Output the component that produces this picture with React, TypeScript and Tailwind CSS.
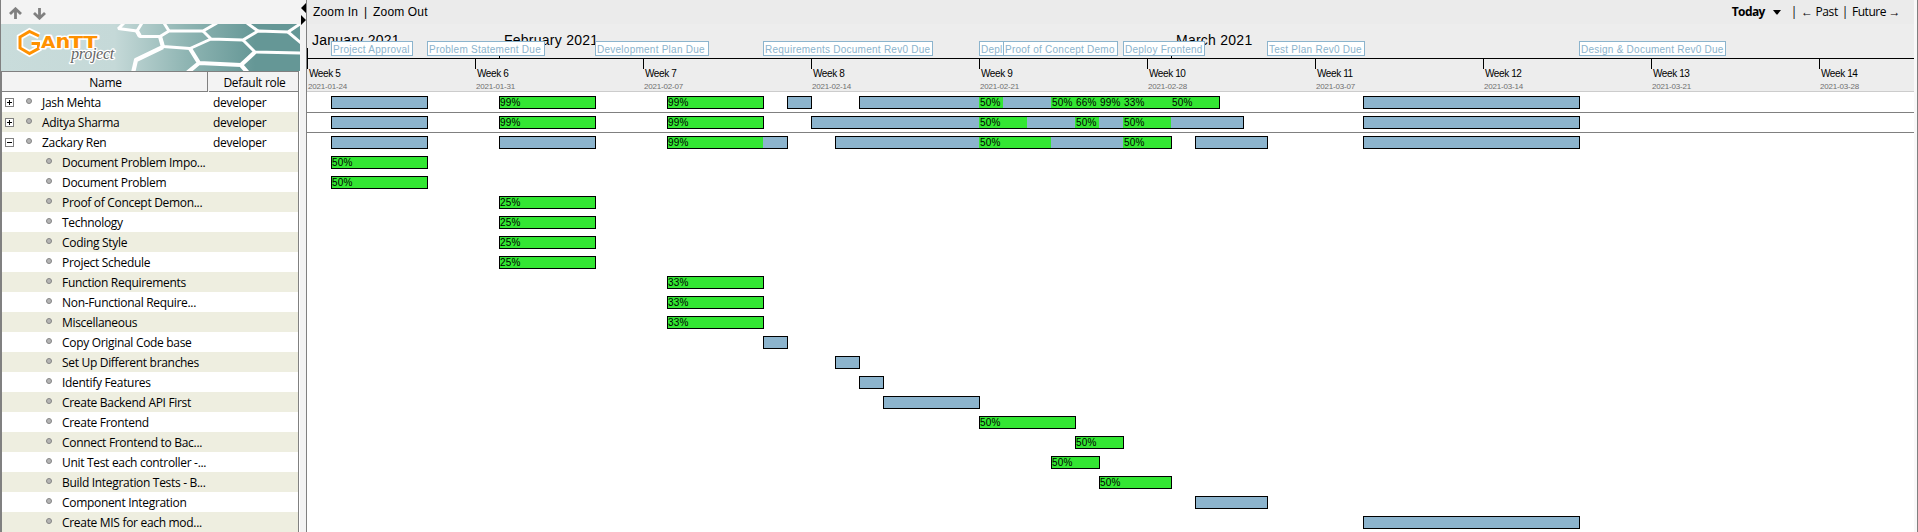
const DAY = 24;

type Segment = { days: number; done?: string };
type Bar = { start: number; segments: Segment[] };
type Row = { name: string; kind: "closed" | "open" | "leaf"; bars: Bar[] };

const bar = (start: number, end: number, done?: string): Bar => ({
  start,
  segments: [{ days: end - start, done }],
});

const leaf = (name: string, start: number, end: number, done?: string): Row => ({
  name,
  kind: "leaf",
  bars: [bar(start, end, done)],
});

const rows: Row[] = [
  {
    name: "Jash Mehta",
    kind: "closed",
    bars: [
      bar(1, 5),
      bar(8, 12, "99%"),
      bar(15, 19, "99%"),
      bar(20, 21),
      {
        start: 23,
        segments: [
          { days: 5 },
          { days: 1, done: "50%" },
          { days: 2 },
          { days: 1, done: "50%" },
          { days: 1, done: "66%" },
          { days: 1, done: "99%" },
          { days: 2, done: "33%" },
          { days: 2, done: "50%" },
        ],
      },
      bar(44, 53),
    ],
  },
  {
    name: "Aditya Sharma",
    kind: "closed",
    bars: [
      bar(1, 5),
      bar(8, 12, "99%"),
      bar(15, 19, "99%"),
      {
        start: 21,
        segments: [
          { days: 7 },
          { days: 2, done: "50%" },
          { days: 2 },
          { days: 1, done: "50%" },
          { days: 1 },
          { days: 2, done: "50%" },
          { days: 3 },
        ],
      },
      bar(44, 53),
    ],
  },
  {
    name: "Zackary Ren",
    kind: "open",
    bars: [
      bar(1, 5),
      bar(8, 12),
      { start: 15, segments: [{ days: 4, done: "99%" }, { days: 1 }] },
      {
        start: 22,
        segments: [{ days: 6 }, { days: 3, done: "50%" }, { days: 3 }, { days: 2, done: "50%" }],
      },
      bar(37, 40),
      bar(44, 53),
    ],
  },
  leaf("Document Problem Impo...", 1, 5, "50%"),
  leaf("Document Problem", 1, 5, "50%"),
  leaf("Proof of Concept Demon...", 8, 12, "25%"),
  leaf("Technology", 8, 12, "25%"),
  leaf("Coding Style", 8, 12, "25%"),
  leaf("Project Schedule", 8, 12, "25%"),
  leaf("Function Requirements", 15, 19, "33%"),
  leaf("Non-Functional Require...", 15, 19, "33%"),
  leaf("Miscellaneous", 15, 19, "33%"),
  leaf("Copy Original Code base", 19, 20),
  leaf("Set Up Different branches", 22, 23),
  leaf("Identify Features", 23, 24),
  leaf("Create Backend API First", 24, 28),
  leaf("Create Frontend", 28, 32, "50%"),
  leaf("Connect Frontend to Bac...", 32, 34, "50%"),
  leaf("Unit Test each controller -...", 31, 33, "50%"),
  leaf("Build Integration Tests - B...", 33, 36, "50%"),
  leaf("Component Integration", 37, 40),
  leaf("Create MIS for each mod...", 44, 53),
];

const weeks = [
  ["Week 5", "2021-01-24"],
  ["Week 6", "2021-01-31"],
  ["Week 7", "2021-02-07"],
  ["Week 8", "2021-02-14"],
  ["Week 9", "2021-02-21"],
  ["Week 10", "2021-02-28"],
  ["Week 11", "2021-03-07"],
  ["Week 12", "2021-03-14"],
  ["Week 13", "2021-03-21"],
  ["Week 14", "2021-03-28"],
];

const months = [
  { label: "January 2021", day: 0 },
  { label: "February 2021", day: 8 },
  { label: "March 2021", day: 36 },
];

const milestones = [
  { label: "Project Approval", day: 1, width: 82 },
  { label: "Problem Statement Due", day: 5, width: 118 },
  { label: "Development Plan Due", day: 12, width: 114 },
  { label: "Requirements Document Rev0 Due", day: 19, width: 170 },
  { label: "Depl", day: 28, width: 25 },
  { label: "Proof of Concept Demo", day: 29, width: 115 },
  { label: "Deploy Frontend", day: 34, width: 82 },
  { label: "Test Plan Rev0 Due", day: 40, width: 98 },
  { label: "Design & Document Rev0 Due", day: 53, width: 147 },
];

function Banner() {
  return (
    <svg width="300" height="47" viewBox="0 24 300 47" className="block shrink-0">
      <defs>
        <linearGradient id="sea" x1="0" x2="1" y1="0" y2="0">
          <stop offset="0" stopColor="#c9dcdb" />
          <stop offset="0.38" stopColor="#c5d9d8" />
          <stop offset="0.62" stopColor="#8fb5b3" />
          <stop offset="0.85" stopColor="#659796" />
          <stop offset="1" stopColor="#659796" />
        </linearGradient>
      </defs>
      <rect x="1" y="24" width="299" height="47" fill="url(#sea)" />
      <g fill="none" stroke="#fff" strokeWidth="3" strokeLinejoin="round">
        <path d="M118 28.500L137 31M118 29L124 23M137 31L142 23M137 31L140 36.500L160 36.500L169 31L203 31L217 23" />
        <path d="M169 31L164 23M203 31L211 39L190 48.500L163 46.500L160 36.500M211 39L243 40L258 31L288 32L300 24" />
        <path d="M258 31L247 23M288 32L301 43M243 40L255 52L301 53" />
      </g>
      <g fill="none" stroke="#fff" strokeWidth="4.200" strokeLinejoin="round">
        <path d="M133 73L136 60L163 47M190 48.500L199 63L241 65L255 52M199 63L187 73M241 65L248 73" />
        <path d="M137 31L140 36.500M160 36.500L163 47" />
      </g>
      <g fill="none" strokeLinejoin="miter">
        <path d="M39 36L29.500 31.500L20 37V48L29.500 53.500L38.500 48.500V43.500H31.500" stroke="#fff" strokeWidth="6.500" />
        <path d="M39 36L29.500 31.500L20 37V48L29.500 53.500L38.500 48.500V43.500H31.500" stroke="#ff9100" strokeWidth="3" />
      </g>
      <g
        className="font-['DejaVu_Sans'] font-bold"
        fill="#ff9100"
        stroke="#fff"
        strokeWidth="3"
        strokeLinejoin="round"
        paintOrder="stroke"
      >
        <text x="41" y="48" fontSize="15" textLength="14" lengthAdjust="spacingAndGlyphs">A</text>
        <text x="55.500" y="48" fontSize="19.500" textLength="14.500" lengthAdjust="spacingAndGlyphs">n</text>
        <text x="69" y="48" fontSize="15" textLength="28" lengthAdjust="spacingAndGlyphs">TT</text>
      </g>
      <text
        x="71"
        y="59"
        fontSize="16"
        textLength="43"
        lengthAdjust="spacingAndGlyphs"
        fill="#666"
        stroke="#fff"
        strokeWidth="2.500"
        strokeLinejoin="round"
        paintOrder="stroke"
        className="font-['Liberation_Serif'] italic"
      >
        project
      </text>
    </svg>
  );
}

function Toolbar() {
  return (
    <div className="flex h-6 shrink-0 items-start gap-[11px] bg-[#f3f3f3] pt-[7px] pl-[8px]">
      {["", "rotate-180"].map((turn) => (
        <svg key={turn} width="13" height="13" viewBox="0 0 13 13" className={turn}>
          <path d="M1 7L6.500 1.800L12 7M6.500 2.500V12" fill="none" stroke="#808080" strokeWidth="2.800" />
        </svg>
      ))}
    </div>
  );
}

function TreeRow({ row, shaded }: { row: Row; shaded: boolean }) {
  const isLeaf = row.kind === "leaf";
  return (
    <div className={`flex h-5 shrink-0 items-center ${shaded ? "bg-[#eeeee0]" : "bg-white"}`}>
      <div className={`flex items-center ${isLeaf ? "w-[60px] pl-11" : "w-10 pl-[3px]"}`}>
        {!isLeaf && (
          <svg width="9" height="9" className="mr-3 shrink-0" shapeRendering="crispEdges">
            <rect x="0.500" y="0.500" width="8" height="8" fill="#fff" stroke="#808080" />
            <path d={row.kind === "closed" ? "M2 4.500H7M4.500 2V7" : "M2 4.500H7"} stroke="#000" />
          </svg>
        )}
        <span className="mb-0.5 size-1.5 rounded-full border border-[#858585] bg-[#b4b4b4]" />
      </div>
      <span className="flex-1 pt-[2px] whitespace-nowrap">{row.name}</span>
      {!isLeaf && <span className="w-[85px] pt-[2px]">developer</span>}
    </div>
  );
}

function ResourcePanel() {
  return (
    <aside className="flex w-[300px] shrink-0 flex-col border-l border-[#808080] bg-white font-['Open_Sans',sans-serif] text-[12px] leading-[20px] tracking-[-0.31px] text-black">
      <Toolbar />
      <div className="-ml-px w-[300px]">
        <Banner />
      </div>
      <div className="mr-px flex flex-col border-t border-r border-l border-[#808080]">
        <div className="flex h-5 shrink-0 bg-[#f3f3f3] text-center leading-[22px]">
          <div className="w-[206px] border-r border-b border-[#808080] pl-0.5">Name</div>
          <div className="ml-px flex-1 border-b border-[#808080] pl-0.5">Default role</div>
        </div>
        {rows.map((row, i) => (
          <TreeRow key={row.name} row={row} shaded={i % 2 === 1} />
        ))}
      </div>
    </aside>
  );
}

function Splitter() {
  return (
    <div className="w-1.5 shrink-0 bg-[#f3f3f3] pt-[3px]">
      <svg width="6" height="22" viewBox="0 0 6 22">
        <path d="M6 0V10L1 5ZM1 12V22L6 17Z" fill="#000" />
      </svg>
    </div>
  );
}

function TimelineHeader() {
  return (
    <div className="relative h-[68px] shrink-0 overflow-hidden border-b border-[#ccc] bg-[#ededed]">
      {months.map((m) => (
        <div
          key={m.label}
          className="absolute top-6 h-[10px] border-l border-black"
          style={{ left: m.day * DAY }}
        >
          <span className="absolute -top-[18px] left-[4px] text-[14px] leading-[20px] tracking-[0.25px] whitespace-nowrap">
            {m.label}
          </span>
        </div>
      ))}
      {milestones.map((m) => (
        <div
          key={m.label}
          className="absolute top-[17px] h-[15px] overflow-hidden border border-[#8cb4cd] bg-white pl-px text-[10px] leading-[15px] tracking-[0.25px] whitespace-nowrap text-[#8cb4cd]"
          style={{ left: m.day * DAY, width: m.width }}
        >
          {m.label}
        </div>
      ))}
      <div className="mt-[34px] flex border-t border-black">
        {weeks.map(([name, date]) => (
          <div key={name} className="flex w-[168px] shrink-0 flex-col">
            <div className="h-[10px] w-px bg-black" />
            <span className="pl-0.5 text-[10px] leading-[10px] tracking-[-0.4px]">{name}</span>
            <span className="pt-[4px] pl-px text-[8px] leading-[8px] tracking-[-0.2px] text-[#707070]">{date}</span>
          </div>
        ))}
      </div>
    </div>
  );
}

function ChartRow({ row }: { row: Row }) {
  return (
    <div
      className={`relative h-5 shrink-0 border-b ${row.kind === "closed" ? "border-[#808080]" : "border-transparent"}`}
    >
      {row.bars.map((b) => {
        const days = b.segments.reduce((sum, s) => sum + s.days, 0);
        return (
          <div
            key={b.start}
            className="absolute top-[3px] flex h-[13px] border border-black bg-[#8cb4cd]"
            style={{ left: b.start * DAY, width: days * DAY + 1 }}
          >
            {b.segments.map((s, i) => (
              <span
                key={i}
                className={`shrink-0 text-[10px] leading-[12px] tracking-[0.15px] whitespace-nowrap ${i === 0 ? "" : "pl-px"} ${s.done ? "bg-[#33e633]" : ""}`}
                style={{ width: s.days * DAY - (i === 0 ? 1 : 0) }}
              >
                {s.done}
              </span>
            ))}
          </div>
        );
      })}
    </div>
  );
}

function ChartPanel() {
  return (
    <main className="flex min-w-0 flex-1 flex-col border-l border-[#808080] bg-white font-['Liberation_Sans',sans-serif] text-black">
      <nav className="flex h-6 shrink-0 items-center bg-[#ebebeb] text-[12px]">
        <span className="pl-1.5 tracking-[0.15px]">Zoom In</span>
        <span className="w-[15px] text-center">|</span>
        <span className="tracking-[0.15px]">Zoom Out</span>
        <div className="ml-auto flex items-center pr-[14px] font-['Open_Sans',sans-serif] tracking-[-0.37px]">
          <span className="font-bold tracking-[-0.6px]">Today</span>
          <svg width="8" height="5" viewBox="0 0 8 5" className="mr-[10px] ml-2">
            <path d="M0 0H8L4.500 4.500H3.500Z" fill="#000" />
          </svg>
          <span className="mr-[4px]">|</span>
          <span className="mr-[4px]">← Past</span>
          <span className="mr-[4px]">|</span>
          <span className="tracking-[-0.5px]">Future →</span>
        </div>
      </nav>
      <TimelineHeader />
      <div className="flex flex-col pt-px">
        {rows.map((row) => (
          <ChartRow key={row.name} row={row} />
        ))}
      </div>
    </main>
  );
}

export default function App() {
  return (
    <div className="flex h-[532px] w-full overflow-hidden">
      <ResourcePanel />
      <Splitter />
      <ChartPanel />
      <div className="w-1 shrink-0 border-r border-[#808080] bg-[#f8f8f8]" />
    </div>
  );
}
